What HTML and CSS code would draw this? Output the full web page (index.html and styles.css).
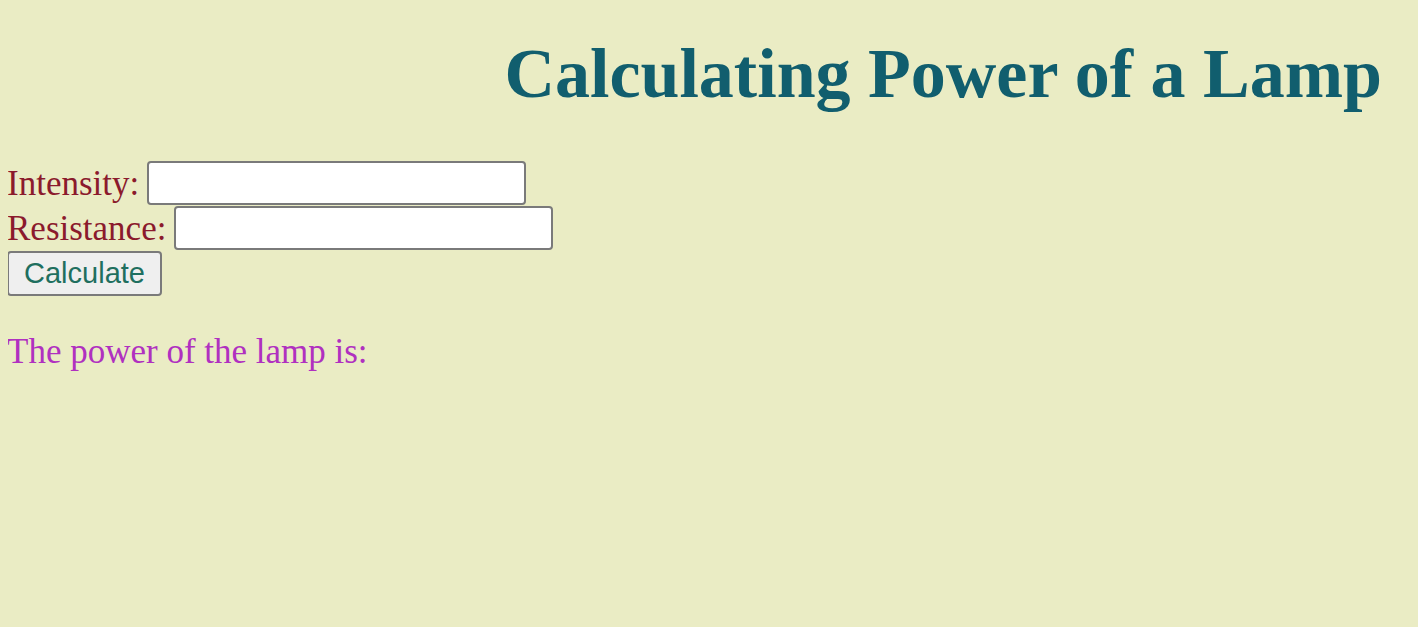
FILE: index.html
```html
<!DOCTYPE html>
<html>
<head>
<meta charset="utf-8">
<title>Lamp Power</title>
<link rel="stylesheet" href="styles.css">
</head>
<body>
<h1 class="title">Calculating Power of a Lamp</h1>
<form class="form">
<div class="row"><label class="label" for="intensity">Intensity:</label><input class="field" id="intensity" type="text"></div>
<div class="row"><label class="label" for="resistance">Resistance:</label><input class="field" id="resistance" type="text"></div>
<button class="btn" type="button">Calculate</button>
</form>
<p class="result">The power of the lamp is:</p>
</body>
</html>
```
FILE: styles.css
```css
body {
  margin: 8px;
  background: #eaecc4;
  font-family: "Liberation Serif", "Times New Roman", serif;
}
.title {
  text-align: right;
  font-size: 70px;
  color: #115e6e;
  margin: 26px 28px 46px 0;
  line-height: 1.15;
}
.form {
  margin: 0;
  font-size: 35px;
  color: #8b1a2c;
}
.row {
  display: flex;
  align-items: baseline;
  gap: 8px;
  margin-bottom: 1px;
}
.label {
  line-height: 1;
  margin-left: -1px;
}
.field {
  box-sizing: border-box;
  font-size: 35px;
  font-family: "Liberation Sans", Arial, sans-serif;
  width: 379px;
  height: 44px;
  padding: 1px 2px;
  background: #fff;
  border: 2px solid #7a7a7a;
  border-radius: 4px;
}
.btn {
  box-sizing: border-box;
  font-size: 29px;
  font-family: "Liberation Sans", Arial, sans-serif;
  color: #1f6f5f;
  background: #efefef;
  border: 2px solid #7a7a7a;
  border-radius: 4px;
  width: 155px;
  height: 45px;
  padding: 0;
  margin: 0 0 0 -1px;
}
.result {
  font-size: 35px;
  color: #b030c0;
  margin: 36px 0 0 -1px;
}
```
